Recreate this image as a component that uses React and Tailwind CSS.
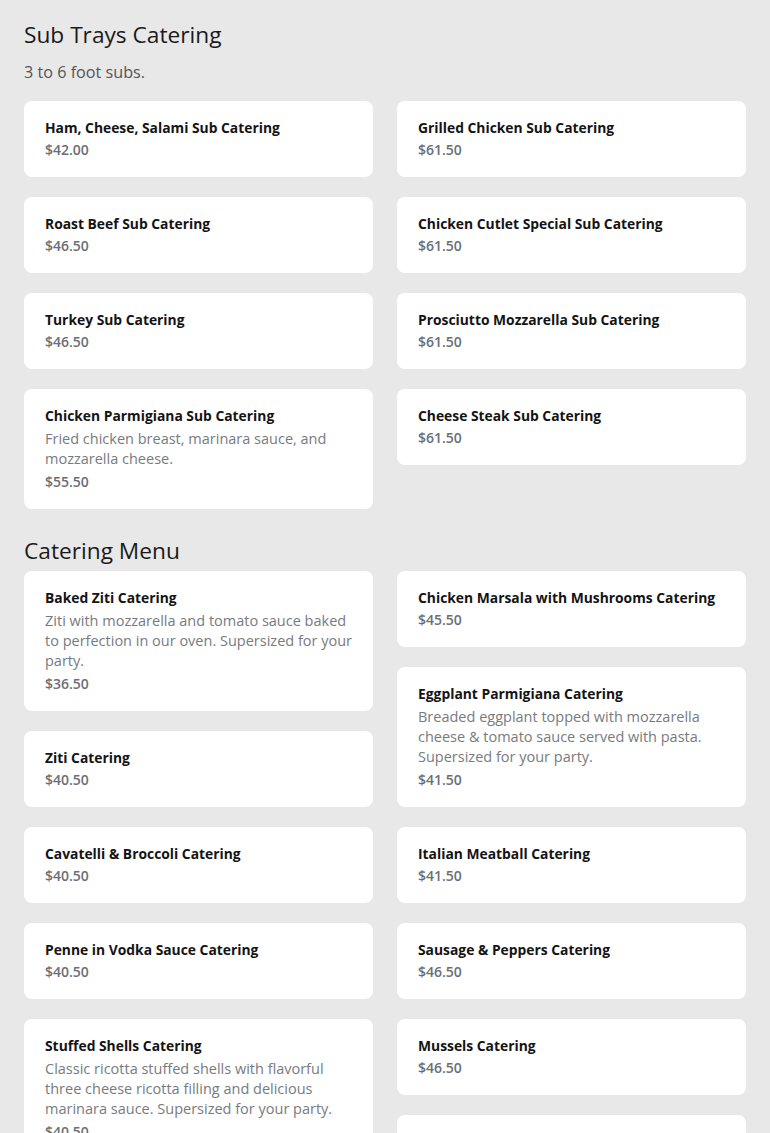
const subs = [
  [
    { name: "Ham, Cheese, Salami Sub Catering", price: "$42.00" },
    { name: "Roast Beef Sub Catering", price: "$46.50" },
    { name: "Turkey Sub Catering", price: "$46.50" },
    {
      name: "Chicken Parmigiana Sub Catering",
      desc: "Fried chicken breast, marinara sauce, and mozzarella cheese.",
      price: "$55.50",
    },
  ],
  [
    { name: "Grilled Chicken Sub Catering", price: "$61.50" },
    { name: "Chicken Cutlet Special Sub Catering", price: "$61.50" },
    { name: "Prosciutto Mozzarella Sub Catering", price: "$61.50" },
    { name: "Cheese Steak Sub Catering", price: "$61.50" },
  ],
];

const catering = [
  [
    {
      name: "Baked Ziti Catering",
      desc: "Ziti with mozzarella and tomato sauce baked to perfection in our oven. Supersized for your party.",
      price: "$36.50",
    },
    { name: "Ziti Catering", price: "$40.50" },
    { name: "Cavatelli & Broccoli Catering", price: "$40.50" },
    { name: "Penne in Vodka Sauce Catering", price: "$40.50" },
    {
      name: "Stuffed Shells Catering",
      desc: "Classic ricotta stuffed shells with flavorful three cheese ricotta filling and delicious marinara sauce. Supersized for your party.",
      price: "$40.50",
    },
  ],
  [
    { name: "Chicken Marsala with Mushrooms Catering", price: "$45.50" },
    {
      name: "Eggplant Parmigiana Catering",
      desc: "Breaded eggplant topped with mozzarella cheese & tomato sauce served with pasta. Supersized for your party.",
      price: "$41.50",
    },
    { name: "Italian Meatball Catering", price: "$41.50" },
    { name: "Sausage & Peppers Catering", price: "$46.50" },
    { name: "Mussels Catering", price: "$46.50" },
    { name: "Chicken Francese Catering", price: "$46.50" },
  ],
];

function Card({ item }) {
  return (
    <div className="bg-white rounded-lg pl-[21px] pr-4 pt-[17px] pb-[17px]">
      <div className="text-[13.85px] leading-5 font-bold text-[#141414]">{item.name}</div>
      {item.desc && (
        <div className="mt-[3px] text-[14.5px] leading-5 text-[#777b80]">{item.desc}</div>
      )}
      <div className={`${item.desc ? "mt-[3px]" : "mt-0.5"} text-[14px] leading-5 font-semibold text-[#6b6f75]`}>
        {item.price}
      </div>
    </div>
  );
}

function Columns({ cols }) {
  return (
    <div className="flex gap-6 items-start">
      {cols.map((col, i) => (
        <div key={i} className="flex-1 flex flex-col gap-5">
          {col.map((it) => (
            <Card key={it.name} item={it} />
          ))}
        </div>
      ))}
    </div>
  );
}

export default function App() {
  return (
    <div
      className="min-h-screen bg-[#e8e8e8] px-6 pt-[19px] pb-10"
      style={{ fontFamily: '"Open Sans", "Noto Sans", sans-serif' }}
    >
      <h2 className="text-[22.7px] leading-8 font-normal text-[#1a1a1a]">Sub Trays Catering</h2>
      <p className="mt-[9px] mb-[17px] text-[16.2px] leading-6 text-[#555555]">3 to 6 foot subs.</p>
      <Columns cols={subs} />
      <h2 className="mt-[26px] mb-[4px] text-[22.7px] leading-8 font-normal text-[#1a1a1a]">Catering Menu</h2>
      <Columns cols={catering} />
    </div>
  );
}
